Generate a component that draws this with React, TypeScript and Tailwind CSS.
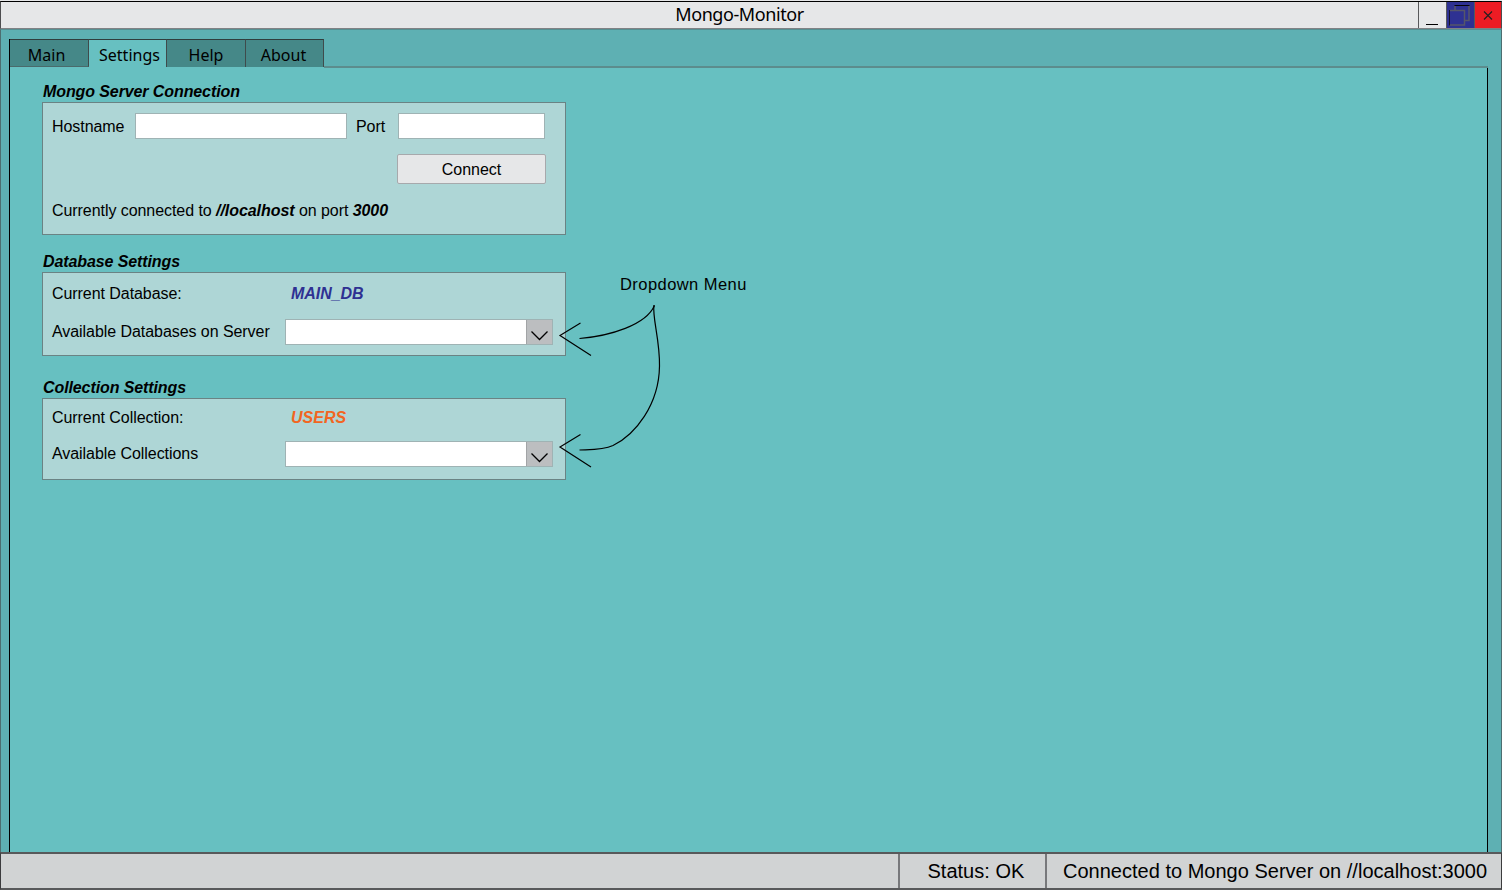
import type { ReactNode } from "react";

const tabs = [
  { name: "Main", style: "w-[79px] bg-[#458888] border-r border-b border-b-[#4a6a6b] pr-[5px]" },
  { name: "Settings", style: "w-[78px] bg-[#67c0c1] border-r pl-[4px]" },
  { name: "Help", style: "w-[79px] bg-[#458888] border-r" },
  { name: "About", style: "w-[78px] bg-[#458888] border-r pr-[2px]" },
];

function TitleBar() {
  return (
    <header className="flex h-[28px] shrink-0 border-x border-t border-b border-x-[#4d4d4f] border-t-black border-b-[#808285] bg-[#e6e7e8]">
      <div className="w-[84px] shrink-0" />
      <h1 className="flex-1 pr-[24px] text-center font-['Noto_Sans',sans-serif] text-[18px] leading-[25px] tracking-[-0.42px] text-black">
        Mongo-Monitor
      </h1>
      <button aria-label="Minimize" className="flex w-[28px] items-end justify-center border-l border-[#58595b] pb-[3px] pr-[2px]">
        <span className="h-px w-[12px] bg-black" />
      </button>
      <button aria-label="Restore" className="w-[28px] border-l border-[#58595b] bg-[#2e3192]">
        <svg width="26" height="26" viewBox="0 0 26 26" fill="none">
          <path d="M8 8V4M22 4V18.500H17.500" stroke="#55566a" strokeWidth="1.5" />
          <path d="M7.500 3.500H22.500" stroke="#05050c" />
          <path d="M2.500 8.500H17.500V23H2" stroke="#55566a" strokeWidth="1.5" />
          <path d="M2.500 8V23.500" stroke="#14142c" />
        </svg>
      </button>
      <button aria-label="Close" className="w-[27px] border-l border-[#58595b] bg-[#ed1c24]">
        <svg width="26" height="26" viewBox="0 0 26 26" stroke="#231f20" strokeWidth="1.1">
          <path d="M9 9.500L17 17.500M17 9.500L9 17.500" />
        </svg>
      </button>
    </header>
  );
}

function Group({ title, className, children }: { title: string; className: string; children: ReactNode }) {
  return (
    <section>
      <h2 className="h-[20px] pl-px pt-px text-[16px] font-bold italic leading-[18px] tracking-[-0.1px]">{title}</h2>
      <div className={"w-[524px] border border-[#6a8384] bg-[#aed6d6] pl-[9px] " + className}>{children}</div>
    </section>
  );
}

function Dropdown() {
  return (
    <div className="flex h-[26px] w-[268px] border border-[#9fb3b4] bg-white">
      <div className="flex-1" />
      <button aria-label="Open list" className="w-[26px] border-l border-[#a2a4a6] bg-[#bcbec0]">
        <svg width="25" height="24" viewBox="0 0 25 24" fill="none" stroke="black" strokeWidth="1.3">
          <path d="M4.500 11.500L12.500 19.500L20.500 11.500" />
        </svg>
      </button>
    </div>
  );
}

function Annotation() {
  return (
    <div className="absolute left-[555px] top-[276px] h-[200px] w-[200px]">
      <p className="pl-[65px] text-[16.5px] leading-[16px] tracking-[0.44px]">Dropdown Menu</p>
      <svg className="absolute left-0 top-0" width="200" height="200" viewBox="555 276 200 200" fill="none" stroke="black" strokeWidth="1.2">
        <path d="M579.5 338.5C610 336 646 325 654.500 305.500" />
        <path d="M654 305C652 317 660 340 659.500 366C659 405 635 435 613 445.500C603 450 592 449.500 579.500 450" />
        <path d="M580.500 323L560 335.500L591 355.500" />
        <path d="M580.500 434.500L560 447L591 467" />
      </svg>
    </div>
  );
}

export default function App() {
  return (
    <div className="relative flex h-[890px] w-[1502px] flex-col overflow-hidden bg-[#e6e7e8] pt-px font-['Liberation_Sans',sans-serif] text-[16px] leading-[18px] tracking-[-0.06px] text-black">
      <TitleBar />
      <main className="flex min-h-0 flex-1 flex-col border-x border-t border-x-[#4d6e70] border-t-[#568f91] bg-[#5eb0b3] pl-[8px] pr-[13px] pt-[9px]">
        <div className="flex h-[28px] shrink-0">
          <nav className="flex border-l border-black">
            {tabs.map((tab) => (
              <button
                key={tab.name}
                className={"border-t border-t-[#303c3d] border-r-[#3f4b4c] text-center font-['Noto_Sans',sans-serif] text-[16px] leading-[31px] tracking-[0.02px] " + tab.style}
              >
                {tab.name}
              </button>
            ))}
          </nav>
          <div className="relative -mb-px flex-1 border-b-2 border-[#5c8c8d]" />
        </div>
        <div className="flex-1 border-x border-black bg-[#67c0c1] pl-[32px] pt-[15px]">
          <Group title="Mongo Server Connection" className="h-[133px]">
            <div className="flex items-center pt-[10px]">
              <label className="w-[83px] pt-[2px]">Hostname</label>
              <div className="h-[26px] w-[212px] border border-[#9fb3b4] bg-white" />
              <label className="w-[51px] pl-[9px] pt-[2px]">Port</label>
              <div className="h-[26px] w-[147px] border border-[#9fb3b4] bg-white" />
            </div>
            <button className="ml-[345px] mt-[15px] block h-[30px] w-[149px] rounded-[2px] border border-[#a7a9ac] bg-[#e6e7e8] pt-[2px] text-center tracking-[0px]">
              Connect
            </button>
            <p className="mt-[18px]">
              Currently connected to <b className="italic">//localhost</b> on port <b className="italic">3000</b>
            </p>
          </Group>
          <div className="h-[17px]" />
          <Group title="Database Settings" className="h-[84px]">
            <div className="flex pt-[12px]">
              <span className="w-[239px]">Current Database:</span>
              <b className="italic text-[#2e3192]">MAIN_DB</b>
            </div>
            <div className="mt-[16px] flex">
              <span className="w-[233px] pt-[4px]">Available Databases on Server</span>
              <Dropdown />
            </div>
          </Group>
          <div className="h-[22px]" />
          <Group title="Collection Settings" className="h-[82px]">
            <div className="flex pt-[10px]">
              <span className="w-[239px]">Current Collection:</span>
              <b className="italic tracking-[0px] text-[#f26522]">USERS</b>
            </div>
            <div className="mt-[14px] flex">
              <span className="w-[233px] pt-[4px]">Available Collections</span>
              <Dropdown />
            </div>
          </Group>
        </div>
      </main>
      <footer className="flex h-[38px] shrink-0 border-x border-b-2 border-t-2 border-x-[#3c3c3e] border-b-[#58595b] border-t-[#58595b] bg-[#d1d3d4] text-[20px] leading-[34px] tracking-[0.01px]">
        <div className="w-[897px]" />
        <div className="w-[147px] border-l-2 border-[#77787b] pl-[27.5px]">Status: OK</div>
        <div className="flex-1 border-l-2 border-[#77787b] pl-[16px]">Connected to Mongo Server on //localhost:3000</div>
      </footer>
      <Annotation />
    </div>
  );
}
